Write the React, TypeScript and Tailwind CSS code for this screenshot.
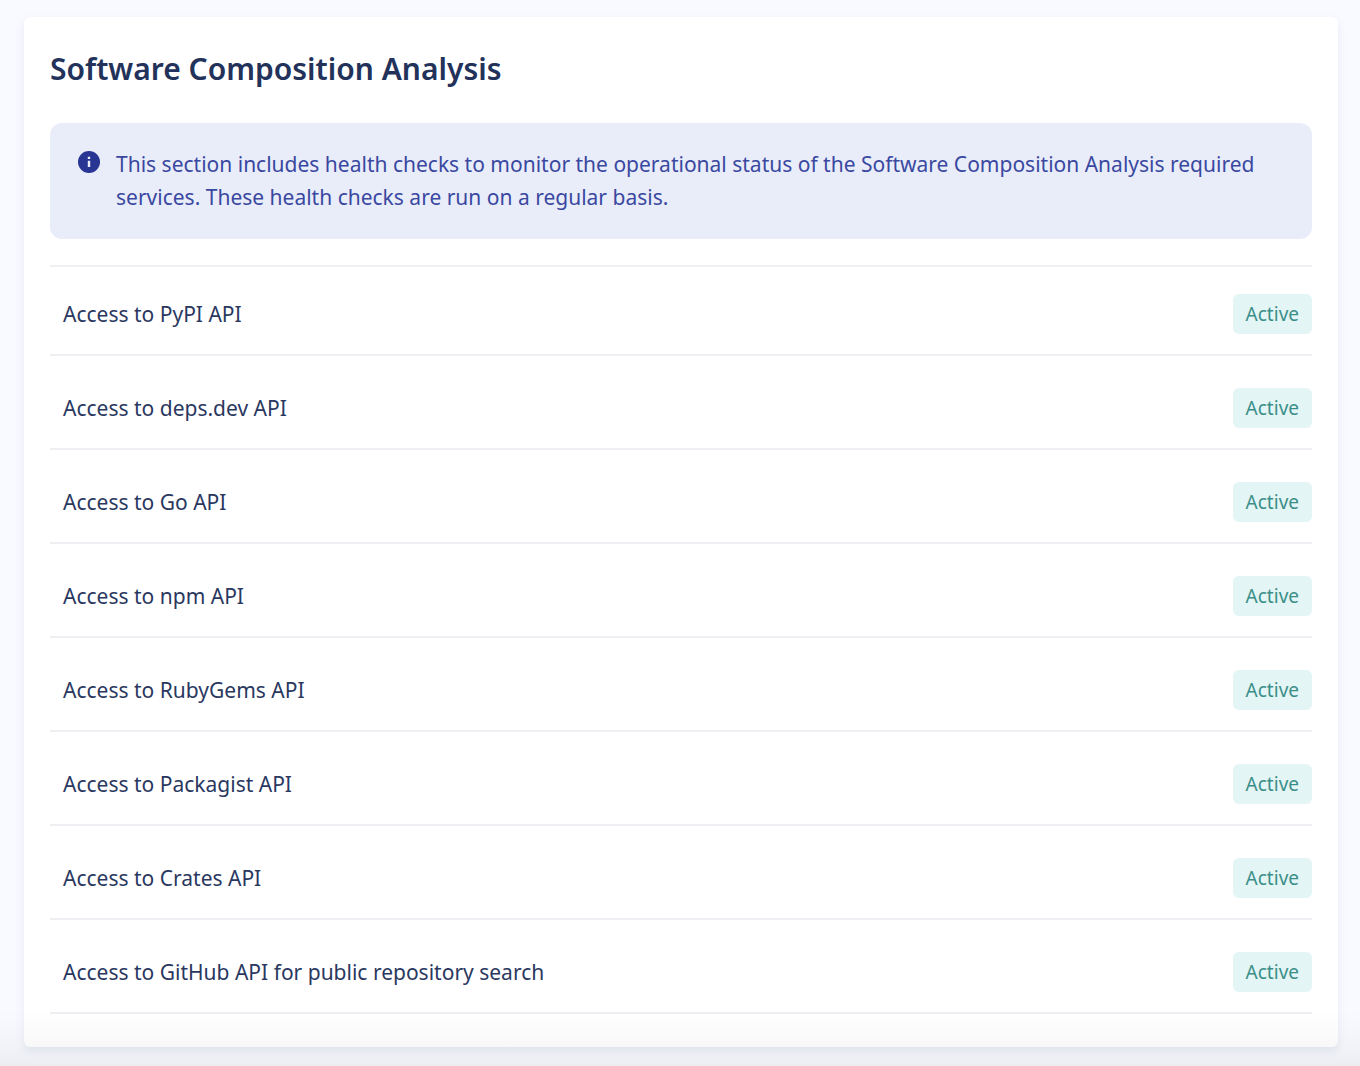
const checks = [
  "PyPI API",
  "deps.dev API",
  "Go API",
  "npm API",
  "RubyGems API",
  "Packagist API",
  "Crates API",
  "GitHub API for public repository search",
];

function InfoIcon() {
  return (
    <svg className="mt-[3px] size-[22px] shrink-0" viewBox="0 0 22 22" aria-hidden="true">
      <circle cx="11" cy="11" r="11" fill="#283593" />
      <path d="M11 5.8v2.2M11 9.8v6.2" stroke="#e9edfa" strokeWidth="2.4" />
    </svg>
  );
}

export default function App() {
  return (
    <main className="relative min-h-screen bg-[#f9faff] pt-[17px] pr-[22px] pb-[19px] pl-6 font-['Noto_Sans',sans-serif] text-[#2a385f]">
      <section className="rounded-md bg-white px-[26px] pt-8 pb-[33px] shadow-[0_4px_8px_rgba(50,90,120,0.1)]">
        <h1 className="text-[30px] leading-10 font-semibold text-[#23325a]">Software Composition Analysis</h1>
        <div className="mt-[34px] flex gap-4 rounded-xl bg-[#e9edfa] px-7 py-[25px] text-[#3a48a0]">
          <InfoIcon />
          <p className="text-[21px] leading-[33px]">
            This section includes health checks to monitor the operational status of the Software Composition Analysis
            required services. These health checks are run on a regular basis.
          </p>
        </div>
        <ul className="mt-[26px] border-t-2 border-[#eeeff2]">
          {checks.map((name) => (
            <li
              key={name}
              className="flex items-center justify-between border-b-2 border-[#eeeff2] pt-8 pb-5 pl-[13px] first:pt-[27px]"
            >
              <span className="text-[21px] leading-8">Access to {name}</span>
              <span className="rounded-md bg-[#e3f5f5] px-[13px] py-1.5 text-[19px] leading-7 text-[#3b8f89]">Active</span>
            </li>
          ))}
        </ul>
      </section>
      <div className="pointer-events-none absolute inset-x-0 bottom-0 h-14 bg-linear-to-t from-black/5 via-black/2 to-transparent" />
    </main>
  );
}
